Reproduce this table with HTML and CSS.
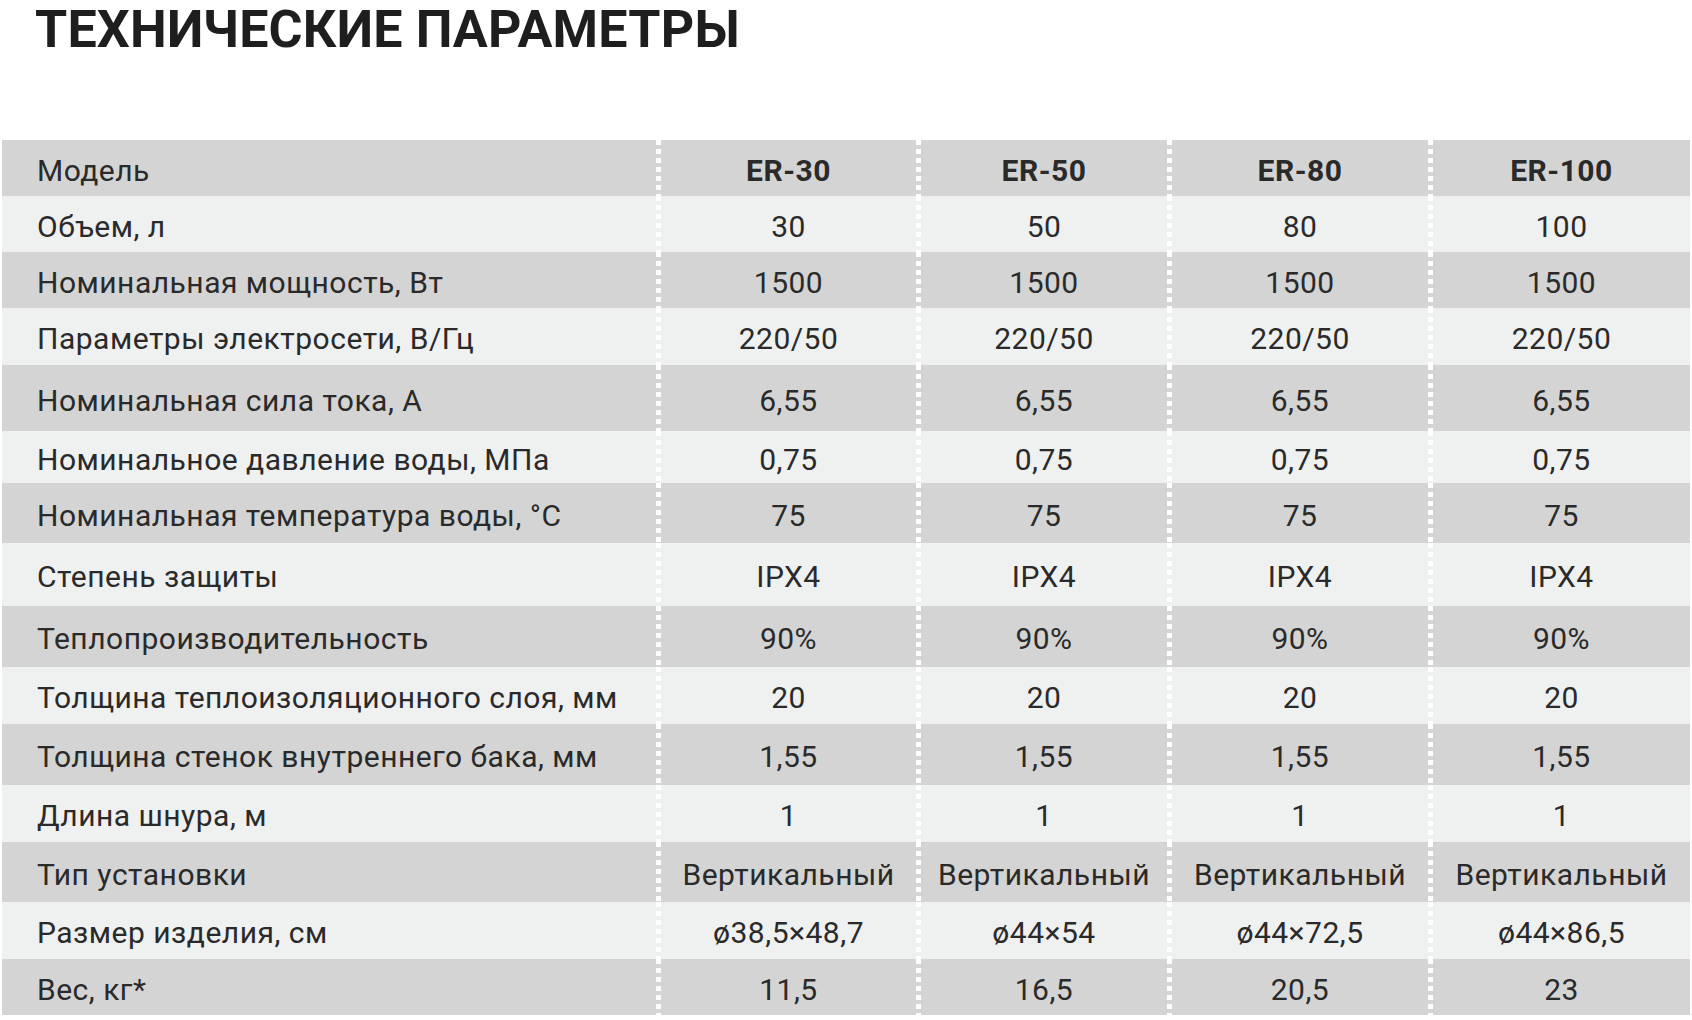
FILE: index.html
```html
<!DOCTYPE html>
<html lang="ru">
<head>
<meta charset="utf-8">
<title>Технические параметры</title>
<link rel="stylesheet" href="styles.css">
</head>
<body>
<h1 class="title">ТЕХНИЧЕСКИЕ ПАРАМЕТРЫ</h1>
<div class="specs">
  <div class="row head"><div class="label">Модель</div><div class="val">ER-30</div><div class="val">ER-50</div><div class="val">ER-80</div><div class="val">ER-100</div></div>
  <div class="row"><div class="label">Объем, л</div><div class="val">30</div><div class="val">50</div><div class="val">80</div><div class="val">100</div></div>
  <div class="row"><div class="label">Номинальная мощность, Вт</div><div class="val">1500</div><div class="val">1500</div><div class="val">1500</div><div class="val">1500</div></div>
  <div class="row"><div class="label">Параметры электросети, В/Гц</div><div class="val">220/50</div><div class="val">220/50</div><div class="val">220/50</div><div class="val">220/50</div></div>
  <div class="row"><div class="label">Номинальная сила тока, А</div><div class="val">6,55</div><div class="val">6,55</div><div class="val">6,55</div><div class="val">6,55</div></div>
  <div class="row"><div class="label">Номинальное давление воды, МПа</div><div class="val">0,75</div><div class="val">0,75</div><div class="val">0,75</div><div class="val">0,75</div></div>
  <div class="row"><div class="label">Номинальная температура воды, °С</div><div class="val">75</div><div class="val">75</div><div class="val">75</div><div class="val">75</div></div>
  <div class="row"><div class="label">Степень защиты</div><div class="val">IPX4</div><div class="val">IPX4</div><div class="val">IPX4</div><div class="val">IPX4</div></div>
  <div class="row"><div class="label">Теплопроизводительность</div><div class="val">90%</div><div class="val">90%</div><div class="val">90%</div><div class="val">90%</div></div>
  <div class="row"><div class="label">Толщина теплоизоляционного слоя, мм</div><div class="val">20</div><div class="val">20</div><div class="val">20</div><div class="val">20</div></div>
  <div class="row"><div class="label">Толщина стенок внутреннего бака, мм</div><div class="val">1,55</div><div class="val">1,55</div><div class="val">1,55</div><div class="val">1,55</div></div>
  <div class="row"><div class="label">Длина шнура, м</div><div class="val">1</div><div class="val">1</div><div class="val">1</div><div class="val">1</div></div>
  <div class="row"><div class="label">Тип установки</div><div class="val">Вертикальный</div><div class="val">Вертикальный</div><div class="val">Вертикальный</div><div class="val">Вертикальный</div></div>
  <div class="row"><div class="label">Размер изделия, см</div><div class="val">ø38,5×48,7</div><div class="val">ø44×54</div><div class="val">ø44×72,5</div><div class="val">ø44×86,5</div></div>
  <div class="row"><div class="label">Вес, кг*</div><div class="val">11,5</div><div class="val">16,5</div><div class="val">20,5</div><div class="val">23</div></div>
</div>
</body>
</html>
```

FILE: styles.css
```css
html, body {
  margin: 0;
  padding: 0;
  background: #ffffff;
}
body {
  width: 1692px;
  font-family: Roboto, "Liberation Sans", sans-serif;
  color: #2a2a2a;
}
.title {
  margin: 0;
  padding: 0 0 0 35px;
  height: 140px;
  box-sizing: border-box;
  font-family: Roboto, "Liberation Sans", sans-serif;
  font-weight: 700;
  font-size: 52px;
  line-height: 60px;
  letter-spacing: 0.2px;
  color: #1e1e1e;
}
.specs {
  margin-left: 2px;
  width: 1688px;
  display: flex;
  flex-direction: column;
}
.row {
  display: grid;
  grid-template-columns: 654px 260px 251px 261px 262px;
  height: 56px;
  background: #eff0f0;
  font-size: 30px;
  letter-spacing: 0.5px;
}
.row:nth-child(odd) {
  background: #d4d4d4;
}
.row:nth-child(4) { height: 57px; }
.row:nth-child(5) { height: 66px; }
.row:nth-child(6) { height: 52px; }
.row:nth-child(7) { height: 60px; }
.row:nth-child(8) { height: 63px; }
.row:nth-child(9) { height: 61px; }
.row:nth-child(10) { height: 57px; }
.row:nth-child(11) { height: 61px; }
.row:nth-child(12) { height: 57px; }
.row:nth-child(13) { height: 60px; }
.row:nth-child(14) { height: 57px; }
.label {
  display: flex;
  align-items: center;
  padding-left: 35px;
  padding-top: 4px;
  white-space: nowrap;
}
.val {
  display: flex;
  align-items: center;
  justify-content: center;
  padding-left: 5px;
  padding-top: 4px;
  white-space: nowrap;
  background-image: repeating-linear-gradient(to bottom, #ffffff 0 5px, transparent 5px 9px);
  background-size: 5px 100%;
  background-repeat: no-repeat;
  background-position: left top;
}
.head .val {
  font-weight: 700;
}
```
